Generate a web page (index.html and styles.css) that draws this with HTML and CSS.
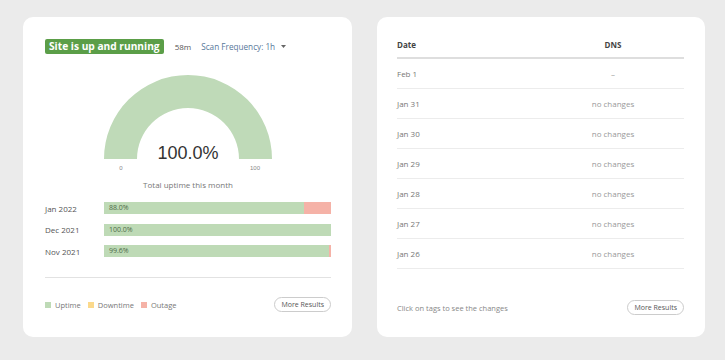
FILE: index.html
```html
<!DOCTYPE html>
<html lang="en">
<head>
    <meta charset="UTF-8">
    <meta name="viewport" content="width=device-width, initial-scale=1.0">
    <title>Uptime</title>
    <link rel="stylesheet" href="styles.css">
</head>
<body>
    <div class="cards">
        <div class="card uptime-card">
            <div class="status-row">
                <span class="badge">Site is up and running</span>
                <span class="ago">58m</span>
                <span class="freq">Scan Frequency: 1h</span>
                <svg class="caret" width="5" height="3" viewBox="0 0 5 3"><path d="M0,0 L5,0 L2.5,3 Z" fill="#666"/></svg>
            </div>

            <div class="gauge">
                <svg width="180" height="100" viewBox="0 0 180 100">
                    <path d="M6,84 A84,84 0 0 1 174,84 L141,84 A51,51 0 0 0 39,84 Z" fill="#bfdab8"/>
                    <text x="23" y="95" class="gauge-tick" text-anchor="middle">0</text>
                    <text x="157" y="95" class="gauge-tick" text-anchor="middle">100</text>
                    <text x="90" y="84" class="gauge-value" text-anchor="middle">100.0%</text>
                </svg>
                <div class="gauge-caption">Total uptime this month</div>
            </div>

            <div class="months">
                <div class="month">
                    <span class="month-label">Jan 2022</span>
                    <div class="bar">
                        <div class="bar-up" style="width: 88%">88.0%</div>
                        <div class="bar-out" style="width: 12%"></div>
                    </div>
                </div>
                <div class="month">
                    <span class="month-label">Dec 2021</span>
                    <div class="bar">
                        <div class="bar-up" style="width: 100%">100.0%</div>
                    </div>
                </div>
                <div class="month">
                    <span class="month-label">Nov 2021</span>
                    <div class="bar">
                        <div class="bar-up" style="width: 99.2%">99.6%</div>
                        <div class="bar-out" style="width: 0.8%"></div>
                    </div>
                </div>
            </div>

            <div class="card-footer">
                <div class="legend">
                    <span class="legend-item"><i class="dot up"></i>Uptime</span>
                    <span class="legend-item"><i class="dot down"></i>Downtime</span>
                    <span class="legend-item"><i class="dot out"></i>Outage</span>
                </div>
                <button class="btn-more">More Results</button>
            </div>
        </div>

        <div class="card dns-card">
            <div class="table">
                <div class="row head">
                    <span>Date</span>
                    <span class="dns">DNS</span>
                </div>
                <div class="row"><span>Feb 1</span><span class="dns">–</span></div>
                <div class="row"><span>Jan 31</span><span class="dns">no changes</span></div>
                <div class="row"><span>Jan 30</span><span class="dns">no changes</span></div>
                <div class="row"><span>Jan 29</span><span class="dns">no changes</span></div>
                <div class="row"><span>Jan 28</span><span class="dns">no changes</span></div>
                <div class="row"><span>Jan 27</span><span class="dns">no changes</span></div>
                <div class="row"><span>Jan 26</span><span class="dns">no changes</span></div>
            </div>
            <div class="card-footer">
                <span class="hint">Click on tags to see the changes</span>
                <button class="btn-more">More Results</button>
            </div>
        </div>
    </div>
</body>
</html>
```

FILE: styles.css
```css
body {
    margin: 0;
    padding: 17px 20px 0 23px;
    background: #ebebeb;
    font-family: "Open Sans", "Noto Sans", sans-serif;
    font-size: 8px;
    color: #666;
}
.cards {
    display: flex;
    gap: 25px;
}
.card {
    background: white;
    border-radius: 10px;
    height: 320px;
    box-sizing: border-box;
    display: flex;
    flex-direction: column;
}
.uptime-card {
    width: 329px;
    padding: 22px 21px 25px 22px;
}
.dns-card {
    width: 328px;
    padding: 22px 21px 22px 20px;
}

/* status line */
.status-row {
    display: flex;
    align-items: center;
    height: 15px;
}
.badge {
    background: #5b9e48;
    color: white;
    font-weight: bold;
    font-size: 10.2px;
    line-height: 15px;
    padding: 0 4px;
    border-radius: 2px;
}
.ago {
    margin-left: 11px;
    color: #555;
}
.freq {
    margin-left: 10px;
    color: #57789a;
    font-size: 8.2px;
}
.caret {
    margin-left: 6px;
}

/* gauge */
.gauge {
    margin-top: 21px;
    display: flex;
    flex-direction: column;
    align-items: center;
}
.gauge svg {
    display: block;
}
.gauge-tick {
    font-family: "Liberation Sans", Arial, sans-serif;
    font-size: 6px;
    fill: #888;
}
.gauge-value {
    font-family: "Liberation Sans", Arial, sans-serif;
    font-size: 18px;
    fill: #333;
}
.gauge-caption {
    margin-top: 4px;
    color: #777;
}

/* monthly bars */
.months {
    margin-top: 12px;
    display: flex;
    flex-direction: column;
    gap: 9.5px;
    padding-bottom: 20px;
    border-bottom: 1px solid #e2e2e2;
}
.month {
    display: flex;
    align-items: center;
    height: 12px;
}
.month-label {
    width: 59px;
    color: #555;
}
.bar {
    flex: 1;
    display: flex;
    height: 12px;
}
.bar-up {
    background: #bedab6;
    color: #4d6b47;
    font-size: 7px;
    line-height: 12px;
    padding-left: 5px;
    box-sizing: border-box;
}
.bar-out {
    background: #f5b2a7;
}

/* footer */
.card-footer {
    margin-top: auto;
    display: flex;
    align-items: center;
    justify-content: space-between;
}
.legend {
    display: flex;
    gap: 7px;
    color: #777;
    font-size: 7.5px;
}
.legend-item {
    display: flex;
    align-items: center;
}
.dot {
    display: inline-block;
    width: 6px;
    height: 6px;
    margin-right: 4px;
}
.dot.up { background: #bedab6; }
.dot.down { background: #fbd98c; }
.dot.out { background: #f5b2a7; }
.btn-more {
    font-family: "Open Sans", "Noto Sans", sans-serif;
    font-size: 7px;
    color: #555;
    background: white;
    border: 1px solid #ccc;
    border-radius: 8px;
    height: 15px;
    padding: 0 6px;
    cursor: pointer;
}
.hint {
    color: #888;
    font-size: 7.5px;
}

/* dns table */
.table {
    display: flex;
    flex-direction: column;
}
.row {
    display: grid;
    grid-template-columns: 145px 1fr;
    height: 30px;
    align-items: center;
    border-bottom: 1px solid #ececec;
    box-sizing: border-box;
    color: #777;
}
.row .dns {
    text-align: center;
    color: #999;
}
.row.head {
    height: 20px;
    align-items: start;
    line-height: 12px;
    border-bottom: 2px solid #dedede;
    font-weight: bold;
    color: #444;
}
.row.head .dns {
    color: #444;
}
```
